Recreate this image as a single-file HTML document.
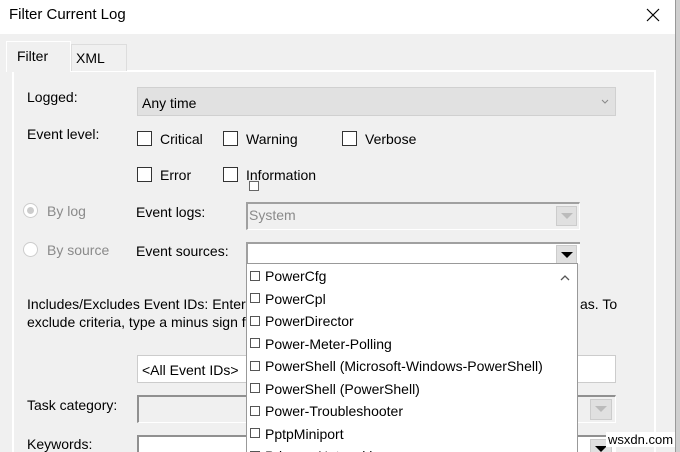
<!DOCTYPE html>
<html><head><meta charset="utf-8"><style>
*{margin:0;padding:0;box-sizing:border-box}
html{width:680px;height:452px;overflow:hidden}
body{width:680px;height:452px;overflow:hidden;background:#f0f0f0;font-family:"Liberation Sans",sans-serif;font-size:14px;color:#000;position:relative}
.a{position:absolute;white-space:nowrap}
.cb{position:absolute;width:15px;height:15px;border:1px solid #333;background:#fff}
.sc{position:absolute;width:10px;height:10px;border:1px solid #555;background:#fff}
.g{color:#8a8a8a}
</style></head><body>
<div class="a" style="left:0;top:0;width:675px;height:34px;background:#fff"></div>
<div class="a" style="left:675px;top:0;width:5px;height:452px;background:#cfcfcf;border-left:1px solid #999"></div>
<div class="a" style="left:9px;top:6px;font-size:15px">Filter Current Log</div>
<svg class="a" style="left:646px;top:8px" width="14" height="14"><path d="M1 1L13 13M13 1L1 13" stroke="#000" stroke-width="1.2"/></svg>
<div class="a" style="left:12px;top:70px;width:644px;height:382px;border:2px solid #fff;border-bottom:none;background:#f0f0f0"></div>
<div class="a" style="left:71px;top:44px;width:56px;height:27px;border:1px solid #ddd;border-bottom:none;background:#f0f0f0"></div>
<div class="a" style="left:76px;top:50px">XML</div>
<div class="a" style="left:6px;top:41px;width:65px;height:31px;background:#f0f0f0;border:1px solid #fff;border-bottom:none"></div>
<div class="a" style="left:17px;top:48px">Filter</div>

<div class="a" style="left:27px;top:89px">Logged:</div>
<div class="a" style="left:137px;top:87px;width:479px;height:29px;background:#e1e1e1;border:1px solid #d0d0d0"></div>
<div class="a" style="left:142px;top:95px">Any time</div>
<svg class="a" style="left:601px;top:99px" width="8" height="6"><path d="M1 1L4 4L7 1" stroke="#888" fill="none"/></svg>

<div class="a" style="left:27px;top:126px">Event level:</div>
<div class="cb" style="left:137px;top:131px"></div><div class="a" style="left:160px;top:131px">Critical</div>
<div class="cb" style="left:223px;top:131px"></div><div class="a" style="left:246px;top:131px">Warning</div>
<div class="cb" style="left:342px;top:131px"></div><div class="a" style="left:365px;top:131px">Verbose</div>
<div class="cb" style="left:137px;top:167px"></div><div class="a" style="left:160px;top:167px">Error</div>
<div class="cb" style="left:223px;top:167px"></div><div class="a" style="left:246px;top:167px">Information</div>
<div class="sc" style="left:249px;top:181px;border-color:#666"></div>

<div class="a" style="left:23px;top:203px;width:15px;height:15px;border-radius:50%;border:1px solid #ccc;background:#fff"></div>
<div class="a" style="left:27px;top:207px;width:7px;height:7px;border-radius:50%;background:#ccc"></div>
<div class="a g" style="left:47px;top:203px">By log</div>
<div class="a" style="left:136px;top:204px">Event logs:</div>
<div class="a" style="left:246px;top:202px;width:334px;height:28px;background:#f0f0f0;border:1px solid #fff;border-top:2px solid #a0a0a0;border-left:2px solid #a0a0a0"></div>
<div class="a g" style="left:249px;top:207px">System</div>
<div class="a" style="left:556px;top:206px;width:21px;height:20px;background:#e0e0e0;border:1px solid #ccc"></div>
<svg class="a" style="left:561px;top:213px" width="12" height="7"><path d="M0 0H12L6 6Z" fill="#bbb"/></svg>

<div class="a" style="left:23px;top:242px;width:15px;height:15px;border-radius:50%;border:1px solid #ccc;background:#fff"></div>
<div class="a g" style="left:47px;top:242px">By source</div>
<div class="a" style="left:136px;top:243px">Event sources:</div>
<div class="a" style="left:246px;top:242px;width:334px;height:22px;background:#fff;border-top:2px solid #a0a0a0;border-left:2px solid #a0a0a0"></div>
<div class="a" style="left:556px;top:245px;width:21px;height:19px;background:#e0e0e0;border:1px solid #ccc"></div>
<svg class="a" style="left:561px;top:252px" width="12" height="7"><path d="M0 0H12L6 6Z" fill="#000"/></svg>

<div class="a" style="left:27px;top:296px">Includes/Excludes Event IDs: Enter ID numbers and/or ID ranges separated by commas. To</div>
<div class="a" style="left:578px;top:296px;background:#f0f0f0;padding-left:2px">as. To</div>
<div class="a" style="left:27px;top:314px">exclude criteria, type a minus sign first. For example 1,3,5-99,-76</div>

<div class="a" style="left:137px;top:355px;width:479px;height:28px;background:#fff;border:1px solid #ccc"></div>
<div class="a" style="left:142px;top:362px">&lt;All Event IDs&gt;</div>
<div class="a" style="left:27px;top:397px">Task category:</div>
<div class="a" style="left:137px;top:395px;width:479px;height:28px;background:#f0f0f0;border:1px solid #fff;border-top:2px solid #909090;border-left:2px solid #909090"></div>
<div class="a" style="left:590px;top:399px;width:22px;height:21px;background:#e0e0e0;border:1px solid #ccc"></div>
<svg class="a" style="left:595px;top:406px" width="12" height="7"><path d="M0 0H12L6 6Z" fill="#bbb"/></svg>
<div class="a" style="left:27px;top:436px">Keywords:</div>
<div class="a" style="left:137px;top:435px;width:479px;height:17px;background:#fff;border-top:2px solid #909090;border-left:2px solid #909090"></div>
<div class="a" style="left:590px;top:439px;width:22px;height:13px;background:#e0e0e0;border:1px solid #ccc;border-bottom:none"></div>
<svg class="a" style="left:595px;top:446px" width="12" height="6"><path d="M0 0H12L6 6Z" fill="#000"/></svg>

<div class="a" style="left:246px;top:263px;width:332px;height:189px;background:#fff;border:1px solid #999;border-bottom:none;overflow:hidden">
<svg class="a" style="left:313px;top:11px" width="10" height="6"><path d="M1 5L5 1L9 5" stroke="#555" fill="none" stroke-width="1.3"/></svg>
<div class="a" style="left:0;top:1px;line-height:22.5px">
<div style="padding-left:18px">PowerCfg</div>
<div style="padding-left:18px">PowerCpl</div>
<div style="padding-left:18px">PowerDirector</div>
<div style="padding-left:18px">Power-Meter-Polling</div>
<div style="padding-left:18px">PowerShell (Microsoft-Windows-PowerShell)</div>
<div style="padding-left:18px">PowerShell (PowerShell)</div>
<div style="padding-left:18px">Power-Troubleshooter</div>
<div style="padding-left:18px">PptpMiniport</div>
<div style="padding-left:18px">Primary-Networking</div>
</div>
<div class="sc" style="left:3px;top:7px"></div>
<div class="sc" style="left:3px;top:29px"></div>
<div class="sc" style="left:3px;top:52px"></div>
<div class="sc" style="left:3px;top:74px"></div>
<div class="sc" style="left:3px;top:97px"></div>
<div class="sc" style="left:3px;top:119px"></div>
<div class="sc" style="left:3px;top:142px"></div>
<div class="sc" style="left:3px;top:164px"></div>
<div class="sc" style="left:3px;top:187px"></div>
</div>
<div class="a" style="left:606px;top:432px;font-size:13px;background:#fff;padding:0 2px">wsxdn.com</div>
</body></html>
